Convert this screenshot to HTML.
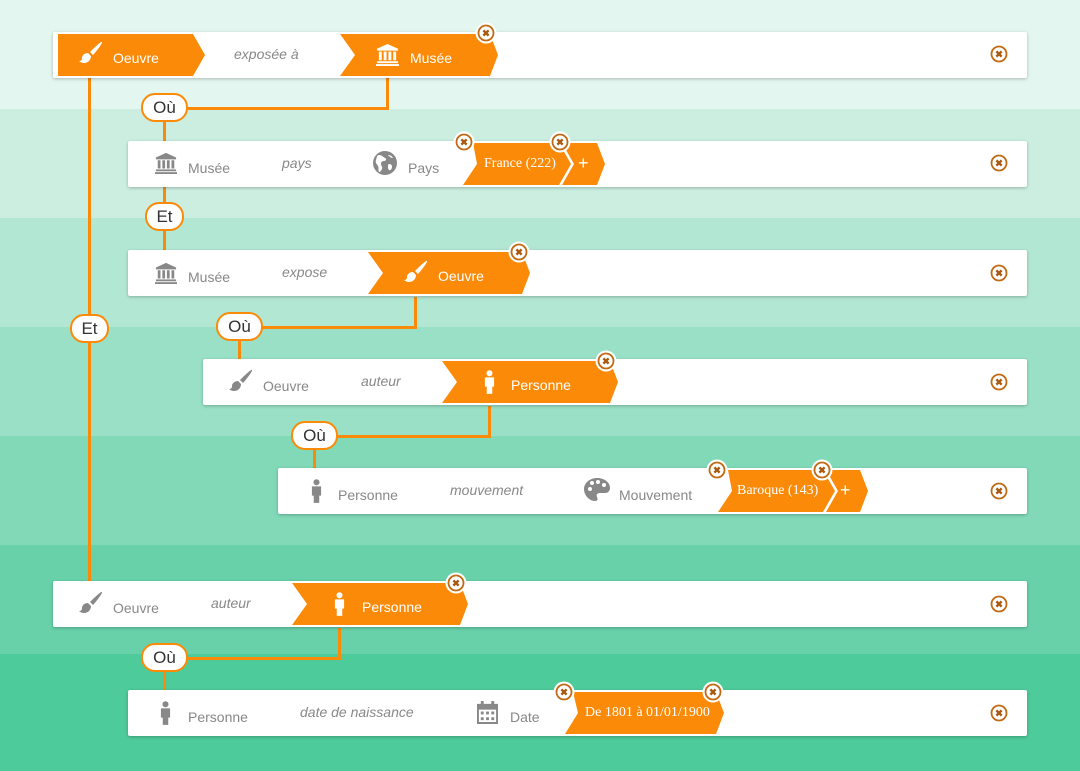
<!DOCTYPE html>
<html><head><meta charset="utf-8"><style>
*{margin:0;padding:0;box-sizing:border-box}
body{width:1080px;height:771px;position:relative;overflow:hidden;font-family:"Liberation Sans",sans-serif}
.band{position:absolute;left:0;width:1080px}
.row{position:absolute;background:#fff;height:46px;right:53px;border-radius:2px;box-shadow:0 1px 3px rgba(0,0,0,.25)}
.chip{position:absolute;background:#fb8a08;height:42px;top:2px;color:#fff;font-size:14px}
.t{position:absolute;top:16px;white-space:nowrap}
.g{position:absolute;color:#888;font-size:14px;top:19px;white-space:nowrap}
.i{position:absolute;color:#888;font-size:14px;font-style:italic;top:14px;white-space:nowrap}
.v{font-family:"Liberation Serif",serif;font-size:14px;top:13px}
.ln{position:absolute;background:#fb8a08}
.pill{position:absolute;background:#fff;border:2px solid #fb8a08;border-radius:14px;height:29px;font-size:17px;color:#333;text-align:center;line-height:25px}
.x{position:absolute;width:22px;height:22px}
.ic{position:absolute}
</style></head><body>
<svg width="0" height="0" style="position:absolute">
<defs>
<symbol id="brush" viewBox="0 0 26 26"><path d="M24 1c1 1-7 11-9 13l-3-3C14 9 23 0 24 1z"/><path d="M10 12l3 3c0 4-3 7-7 7-2 0-4-1-5-2 2 0 3-1 3-3 0-3 3-5 6-5z"/></symbol>
<symbol id="mus" viewBox="0 0 24 24"><path d="M12 1L1 6v2h22V6z"/><rect x="3" y="9" width="3" height="9"/><rect x="8" y="9" width="3" height="9"/><rect x="13" y="9" width="3" height="9"/><rect x="18" y="9" width="3" height="9"/><rect x="1" y="19" width="22" height="2"/><rect x="0" y="22" width="24" height="2"/></symbol>
<symbol id="per" viewBox="0 0 12 26"><circle cx="6" cy="3.5" r="3.3"/><path d="M1 8h10v10H9v8H3v-8H1z"/></symbol>
<symbol id="glo" viewBox="0 0 24 24"><circle cx="12" cy="12" r="12"/><path fill="#fff" d="M6 4c3 0 4 2 6 3s1 3-1 3-3 1-3 3 2 3 1 5-2 3-3 3c-1-2 0-4-1-6S2 12 3 9s1-5 3-5zM16 13c2 0 3 1 3 3s-2 4-3 3-1-2-1-3 0-3 1-3zM15 4c2 0 4 1 5 3-2 0-3-1-5-3z"/></symbol>
<symbol id="pal" viewBox="0 0 26 24"><path d="M13 0C6 0 0 5 0 11c0 6 5 12 11 12 3 0 3-2 2-4s0-4 3-4h5c3 0 5-2 5-5C26 4 20 0 13 0z"/><circle cx="6" cy="11" r="2" fill="#fff"/><circle cx="8" cy="5" r="2" fill="#fff"/><circle cx="14" cy="4" r="2" fill="#fff"/><circle cx="20" cy="7" r="2" fill="#fff"/></symbol>
<symbol id="cal" viewBox="0 0 22 24"><rect x="4" y="0" width="3" height="4"/><rect x="15" y="0" width="3" height="4"/><path d="M0 3h22v21H0zM2 9v13h18V9z"/><rect x="4" y="11" width="3" height="3"/><rect x="9.5" y="11" width="3" height="3"/><rect x="15" y="11" width="3" height="3"/><rect x="4" y="17" width="3" height="3"/><rect x="9.5" y="17" width="3" height="3"/><rect x="15" y="17" width="3" height="3"/></symbol>
<symbol id="xx" viewBox="0 0 22 22"><circle cx="11" cy="11" r="10.5" fill="#fff"/><circle cx="11" cy="11" r="7.5" fill="none" stroke="#c06a14" stroke-width="1.8"/><path d="M8.4 8.4l5.2 5.2M13.6 8.4l-5.2 5.2" stroke="#a85a10" stroke-width="2.4"/></symbol>
</defs></svg>

<div class="band" style="top:0;height:109px;background:#e3f6ef"></div>
<div class="band" style="top:109px;height:109px;background:#cbeee0"></div>
<div class="band" style="top:218px;height:109px;background:#b2e7d3"></div>
<div class="band" style="top:327px;height:109px;background:#99e0c6"></div>
<div class="band" style="top:436px;height:109px;background:#81d9b8"></div>
<div class="band" style="top:545px;height:109px;background:#68d1aa"></div>
<div class="band" style="top:654px;height:117px;background:#4ecb9b"></div>

<div class="ln" style="left:88px;top:78px;width:3px;height:503px"></div>
<div class="ln" style="left:386px;top:78px;width:3px;height:32px"></div>
<div class="ln" style="left:185px;top:107px;width:204px;height:3px"></div>
<div class="ln" style="left:163px;top:120px;width:3px;height:21px"></div>
<div class="ln" style="left:163px;top:187px;width:3px;height:63px"></div>
<div class="ln" style="left:414px;top:297px;width:3px;height:32px"></div>
<div class="ln" style="left:260px;top:326px;width:157px;height:3px"></div>
<div class="ln" style="left:238px;top:340px;width:3px;height:19px"></div>
<div class="ln" style="left:488px;top:406px;width:3px;height:32px"></div>
<div class="ln" style="left:335px;top:435px;width:156px;height:3px"></div>
<div class="ln" style="left:313px;top:449px;width:3px;height:19px"></div>
<div class="ln" style="left:338px;top:628px;width:3px;height:32px"></div>
<div class="ln" style="left:185px;top:657px;width:156px;height:3px"></div>
<div class="ln" style="left:163px;top:671px;width:3px;height:19px"></div>

<div class="pill" style="left:141px;top:93px;width:47px">Où</div>
<div class="pill" style="left:145px;top:202px;width:39px">Et</div>
<div class="pill" style="left:70px;top:314px;width:39px">Et</div>
<div class="pill" style="left:216px;top:312px;width:47px">Où</div>
<div class="pill" style="left:291px;top:421px;width:47px">Où</div>
<div class="pill" style="left:141px;top:643px;width:47px">Où</div>

<!-- row 1 -->
<div class="row" style="left:53px;top:32px">
 <div class="chip" style="left:5px;width:147px;clip-path:polygon(0 0,135px 0,100% 50%,135px 100%,0 100%)">
  <svg class="ic" style="left:20px;top:7px;fill:#fff" width="26" height="26"><use href="#brush"/></svg>
  <span class="t" style="left:55px">Oeuvre</span></div>
 <span class="i" style="left:181px">exposée à</span>
 <div class="chip" style="left:287px;width:158px;clip-path:polygon(0 0,150px 0,100% 50%,150px 100%,0 100%,15px 50%)">
  <svg class="ic" style="left:36px;top:9px;fill:#fff" width="23" height="23"><use href="#mus"/></svg>
  <span class="t" style="left:70px">Musée</span></div>
</div>
<svg class="x" style="left:475px;top:22px"><use href="#xx"/></svg>
<svg class="x" style="left:988px;top:43px"><use href="#xx"/></svg>

<!-- row 2 -->
<div class="row" style="left:128px;top:141px">
 <svg class="ic" style="left:27px;top:11px;fill:#888" width="22" height="22"><use href="#mus"/></svg>
 <span class="g" style="left:60px">Musée</span>
 <span class="i" style="left:154px">pays</span>
 <svg class="ic" style="left:245px;top:10px;fill:#888" width="24" height="24"><use href="#glo"/></svg>
 <span class="g" style="left:280px">Pays</span>
 <div class="chip" style="left:430px;width:47px;clip-path:polygon(0 0,39px 0,100% 50%,39px 100%,0 100%,12px 50%)"><span class="t" style="left:20px;top:10px;font-size:18px">+</span></div>
 <div class="chip" style="left:335px;width:111px;background:#fff;clip-path:polygon(10px 0,99px 0,100% 50%,99px 100%,0 100%,14px 50%)"></div>
 <div class="chip" style="left:335px;width:108px;clip-path:polygon(10px 0,96px 0,100% 50%,96px 100%,0 100%,14px 50%)"><span class="t v" style="left:21px">France (222)</span></div>
</div>
<svg class="x" style="left:453px;top:131px"><use href="#xx"/></svg>
<svg class="x" style="left:549px;top:131px"><use href="#xx"/></svg>
<svg class="x" style="left:988px;top:152px"><use href="#xx"/></svg>

<!-- row 3 -->
<div class="row" style="left:128px;top:250px">
 <svg class="ic" style="left:27px;top:12px;fill:#888" width="22" height="22"><use href="#mus"/></svg>
 <span class="g" style="left:60px">Musée</span>
 <span class="i" style="left:154px">expose</span>
 <div class="chip" style="left:240px;width:162px;clip-path:polygon(0 0,154px 0,100% 50%,154px 100%,0 100%,15px 50%)">
  <svg class="ic" style="left:35px;top:8px;fill:#fff" width="26" height="26"><use href="#brush"/></svg>
  <span class="t" style="left:70px">Oeuvre</span></div>
</div>
<svg class="x" style="left:508px;top:241px"><use href="#xx"/></svg>
<svg class="x" style="left:988px;top:262px"><use href="#xx"/></svg>

<!-- row 4 -->
<div class="row" style="left:203px;top:359px">
 <svg class="ic" style="left:25px;top:10px;fill:#888" width="26" height="26"><use href="#brush"/></svg>
 <span class="g" style="left:60px">Oeuvre</span>
 <span class="i" style="left:158px">auteur</span>
 <div class="chip" style="left:239px;width:176px;clip-path:polygon(0 0,168px 0,100% 50%,168px 100%,0 100%,15px 50%)">
  <svg class="ic" style="left:42px;top:9px;fill:#fff" width="11" height="24"><use href="#per"/></svg>
  <span class="t" style="left:69px">Personne</span></div>
</div>
<svg class="x" style="left:595px;top:350px"><use href="#xx"/></svg>
<svg class="x" style="left:988px;top:371px"><use href="#xx"/></svg>

<!-- row 5 -->
<div class="row" style="left:278px;top:468px">
 <svg class="ic" style="left:33px;top:11px;fill:#888" width="11" height="24"><use href="#per"/></svg>
 <span class="g" style="left:60px">Personne</span>
 <span class="i" style="left:172px">mouvement</span>
 <svg class="ic" style="left:306px;top:10px;fill:#888" width="26" height="24"><use href="#pal"/></svg>
 <span class="g" style="left:341px">Mouvement</span>
 <div class="chip" style="left:544px;width:46px;clip-path:polygon(0 0,38px 0,100% 50%,38px 100%,0 100%,12px 50%)"><span class="t" style="left:18px;top:10px;font-size:18px">+</span></div>
 <div class="chip" style="left:440px;width:120px;background:#fff;clip-path:polygon(10px 0,108px 0,100% 50%,108px 100%,0 100%,14px 50%)"></div>
 <div class="chip" style="left:440px;width:117px;clip-path:polygon(10px 0,105px 0,100% 50%,105px 100%,0 100%,14px 50%)"><span class="t v" style="left:19px">Baroque (143)</span></div>
</div>
<svg class="x" style="left:706px;top:459px"><use href="#xx"/></svg>
<svg class="x" style="left:811px;top:459px"><use href="#xx"/></svg>
<svg class="x" style="left:988px;top:480px"><use href="#xx"/></svg>

<!-- row 6 -->
<div class="row" style="left:53px;top:581px">
 <svg class="ic" style="left:25px;top:10px;fill:#888" width="26" height="26"><use href="#brush"/></svg>
 <span class="g" style="left:60px">Oeuvre</span>
 <span class="i" style="left:158px">auteur</span>
 <div class="chip" style="left:239px;width:176px;clip-path:polygon(0 0,168px 0,100% 50%,168px 100%,0 100%,15px 50%)">
  <svg class="ic" style="left:42px;top:9px;fill:#fff" width="11" height="24"><use href="#per"/></svg>
  <span class="t" style="left:70px">Personne</span></div>
</div>
<svg class="x" style="left:445px;top:572px"><use href="#xx"/></svg>
<svg class="x" style="left:988px;top:593px"><use href="#xx"/></svg>

<!-- row 7 -->
<div class="row" style="left:128px;top:690px">
 <svg class="ic" style="left:32px;top:11px;fill:#888" width="11" height="24"><use href="#per"/></svg>
 <span class="g" style="left:60px">Personne</span>
 <span class="i" style="left:172px">date de naissance</span>
 <svg class="ic" style="left:349px;top:11px;fill:#888" width="21" height="23"><use href="#cal"/></svg>
 <span class="g" style="left:382px">Date</span>
 <div class="chip" style="left:437px;width:159px;clip-path:polygon(8px 0,151px 0,100% 50%,151px 100%,0 100%,13px 50%)"><span class="t v" style="left:20px">De 1801 à 01/01/1900</span></div>
</div>
<svg class="x" style="left:553px;top:681px"><use href="#xx"/></svg>
<svg class="x" style="left:702px;top:681px"><use href="#xx"/></svg>
<svg class="x" style="left:988px;top:702px"><use href="#xx"/></svg>
</body></html>
